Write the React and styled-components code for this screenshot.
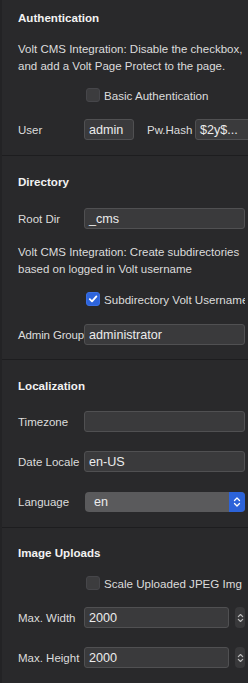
import React from "react";
import styled, { createGlobalStyle } from "styled-components";

const GlobalStyle = createGlobalStyle`
  html, body {
    margin: 0;
    padding: 0;
    background: #29292b;
    overflow: hidden;
  }
  body {
    font-family: "Liberation Sans", Arial, sans-serif;
    -webkit-font-smoothing: antialiased;
  }
`;

const Panel = styled.div`
  width: 248px;
  height: 683px;
  box-sizing: border-box;
  border-left: 2px solid #232325;
  background: #29292b;
  color: #dcdcdc;
  overflow: hidden;
`;

const Section = styled.section`
  padding: ${(p) => p.$top || 18}px 3px ${(p) => p.$bottom || 15}px 16px;
  border-bottom: ${(p) => (p.$last ? "none" : "1px solid #1d1d1f")};
  display: flex;
  flex-direction: column;
`;

const Heading = styled.h3`
  margin: 0;
  height: 16px;
  line-height: 16px;
  font-size: 11.6px;
  font-weight: bold;
  color: #f2f2f2;
`;

const Note = styled.p`
  margin: ${(p) => p.$mt}px 0 0;
  font-size: 11.5px;
  line-height: 17px;
  color: #dcdcdc;
`;

const Row = styled.div`
  display: flex;
  align-items: center;
  height: 21px;
  margin-top: ${(p) => p.$mt}px;
`;

const Label = styled.span`
  flex: 0 0 auto;
  min-width: ${(p) => p.$w || 66}px;
  font-size: 11.5px;
  letter-spacing: ${(p) => (p.$tight ? "-0.15px" : "0")};
  color: #dcdcdc;
  white-space: nowrap;
  margin-left: ${(p) => p.$ml || 0}px;
`;

const Input = styled.div`
  box-sizing: border-box;
  height: 21px;
  flex: ${(p) => (p.$w ? `0 0 ${p.$w}px` : "1 1 auto")};
  background: #3a3a3c;
  border: 1px solid #505052;
  border-radius: 3px;
  padding: 0 4px;
  font-size: 12.6px;
  line-height: 20px;
  color: #ececec;
  white-space: nowrap;
  overflow: hidden;
`;

const CheckRow = styled.div`
  display: flex;
  align-items: center;
  height: 16px;
  margin-top: ${(p) => p.$mt}px;
  padding-left: 68px;
  overflow: hidden;
`;

const Box = styled.span`
  flex: 0 0 14px;
  width: 14px;
  height: 14px;
  box-sizing: border-box;
  border-radius: 3px;
  background: ${(p) => (p.$checked ? "#2d64dc" : "#3c3c3e")};
  border: 1px solid ${(p) => (p.$checked ? "#3a70e6" : "#46464a")};
  display: flex;
  align-items: center;
  justify-content: center;
`;

const CheckLabel = styled.span`
  margin-left: 4px;
  font-size: 11.6px;
  color: #dcdcdc;
  white-space: nowrap;
`;

const Select = styled.div`
  flex: 1 1 auto;
  margin-left: 1px;
  height: 20px;
  display: flex;
  border-radius: 4px;
  background: #5a5a5c;
  overflow: hidden;
`;

const SelectValue = styled.span`
  flex: 1;
  padding-left: 9px;
  font-size: 12.6px;
  line-height: 20px;
  color: #ececec;
`;

const SelectCap = styled.span`
  flex: 0 0 16px;
  background: #2c63d9;
  display: flex;
  align-items: center;
  justify-content: center;
`;

const Stepper = styled.span`
  flex: 0 0 10px;
  height: 21px;
  margin-left: 6px;
  border-radius: 4px;
  background: #38383a;
  display: flex;
  align-items: center;
  justify-content: center;
`;

const Check = () => (
  <svg width="10" height="10" viewBox="0 0 10 10">
    <path d="M1.8 5.2 L4 7.4 L8.4 2.4" fill="none" stroke="#fff" strokeWidth="1.8" strokeLinecap="round" strokeLinejoin="round" />
  </svg>
);

const UpDown = ({ color = "#fff", w = 8, h = 12 }) => (
  <svg width={w} height={h} viewBox="0 0 8 12">
    <path d="M1.5 4.5 L4 2 L6.5 4.5 M1.5 7.5 L4 10 L6.5 7.5" fill="none" stroke={color} strokeWidth="1.3" strokeLinecap="round" strokeLinejoin="round" />
  </svg>
);

export default function App() {
  return (
    <Panel>
      <GlobalStyle />
      <Section $top={10} $bottom={15}>
        <Heading>Authentication</Heading>
        <Note $mt={15}>
          Volt CMS Integration: Disable the checkbox, and add a Volt Page Protect to the page.
        </Note>
        <CheckRow $mt={12}>
          <Box />
          <CheckLabel>Basic Authentication</CheckLabel>
        </CheckRow>
        <Row $mt={16}>
          <Label>User</Label>
          <Input $w={50}>admin</Input>
          <Label $w={48} $ml={13}>Pw.Hash</Label>
          <Input $w={60}>$2y$...</Input>
        </Row>
      </Section>

      <Section $top={18} $bottom={14}>
        <Heading>Directory</Heading>
        <Row $mt={18}>
          <Label>Root Dir</Label>
          <Input>_cms</Input>
        </Row>
        <Note $mt={15}>
          Volt CMS Integration: Create subdirectories based on logged in Volt username
        </Note>
        <CheckRow $mt={13}>
          <Box $checked>
            <Check />
          </Box>
          <CheckLabel>Subdirectory Volt Username</CheckLabel>
        </CheckRow>
        <Row $mt={17}>
          <Label $tight>Admin Group</Label>
          <Input>administrator</Input>
        </Row>
      </Section>

      <Section $top={18} $bottom={15}>
        <Heading>Localization</Heading>
        <Row $mt={17}>
          <Label>Timezone</Label>
          <Input />
        </Row>
        <Row $mt={19}>
          <Label>Date Locale</Label>
          <Input>en-US</Input>
        </Row>
        <Row $mt={19}>
          <Label>Language</Label>
          <Select>
            <SelectValue>en</SelectValue>
            <SelectCap>
              <UpDown />
            </SelectCap>
          </Select>
        </Row>
      </Section>

      <Section $top={17} $last>
        <Heading>Image Uploads</Heading>
        <CheckRow $mt={14}>
          <Box />
          <CheckLabel>Scale Uploaded JPEG Img</CheckLabel>
        </CheckRow>
        <Row $mt={16}>
          <Label>Max. Width</Label>
          <Input>2000</Input>
          <Stepper>
            <UpDown color="#bdbdbd" w={7} h={12} />
          </Stepper>
        </Row>
        <Row $mt={19}>
          <Label>Max. Height</Label>
          <Input>2000</Input>
          <Stepper>
            <UpDown color="#bdbdbd" w={7} h={12} />
          </Stepper>
        </Row>
      </Section>
    </Panel>
  );
}
